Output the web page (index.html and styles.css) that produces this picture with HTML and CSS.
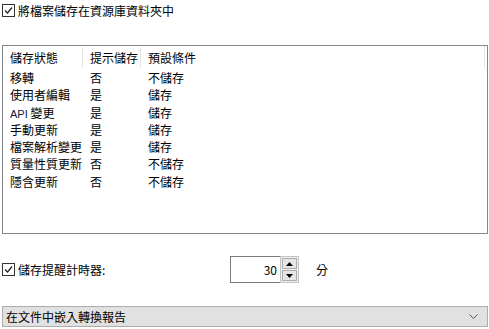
FILE: index.html
```html
<!DOCTYPE html>
<html lang="zh-Hant">

<head>
    <meta charset="UTF-8">
    <title>儲存設定</title>
    <link rel="stylesheet" href="styles.css">
</head>

<body>
    <!-- Save to repository -->
    <label class="check-row top-check">
        <span class="checkbox">
            <svg viewBox="0 0 11 11"><polyline points="2,5.5 4.5,8 9,2.5" fill="none" stroke="#222" stroke-width="1.2"></polyline></svg>
        </span>
        <span>將檔案儲存在資源庫資料夾中</span>
    </label>

    <!-- Save state list -->
    <div class="list">
        <div class="list-head">
            <div class="cell">儲存狀態</div>
            <div class="cell">提示儲存</div>
            <div class="cell">預設條件</div>
        </div>
        <div class="list-body">
            <div class="row"><div class="cell">移轉</div><div class="cell">否</div><div class="cell">不儲存</div></div>
            <div class="row"><div class="cell">使用者編輯</div><div class="cell">是</div><div class="cell">儲存</div></div>
            <div class="row"><div class="cell"><span class="latin">API</span> 變更</div><div class="cell">是</div><div class="cell">儲存</div></div>
            <div class="row"><div class="cell">手動更新</div><div class="cell">是</div><div class="cell">儲存</div></div>
            <div class="row"><div class="cell">檔案解析變更</div><div class="cell">是</div><div class="cell">儲存</div></div>
            <div class="row"><div class="cell">質量性質更新</div><div class="cell">否</div><div class="cell">不儲存</div></div>
            <div class="row"><div class="cell">隱含更新</div><div class="cell">否</div><div class="cell">不儲存</div></div>
        </div>
    </div>

    <!-- Reminder timer -->
    <div class="timer">
        <label class="check-row timer-label">
            <span class="checkbox">
                <svg viewBox="0 0 11 11"><polyline points="2,5.5 4.5,8 9,2.5" fill="none" stroke="#222" stroke-width="1.2"></polyline></svg>
            </span>
            <span>儲存提醒計時器:</span>
        </label>
        <div class="spin">
            <div class="spin-field">30</div>
            <div class="spin-buttons">
                <div class="spin-btn"><svg viewBox="0 0 7 4"><polygon points="0,4 3.5,0 7,4" fill="#000"></polygon></svg></div>
                <div class="spin-btn"><svg viewBox="0 0 7 4"><polygon points="0,0 7,0 3.5,4" fill="#000"></polygon></svg></div>
            </div>
        </div>
        <span class="unit">分</span>
    </div>

    <!-- Report option -->
    <div class="dropdown">
        <span>在文件中嵌入轉換報告</span>
        <svg class="chevron" viewBox="0 0 9 5"><polyline points="0.5,0.5 4.5,4.5 8.5,0.5" fill="none" stroke="#555" stroke-width="1"></polyline></svg>
    </div>
</body>

</html>
```

FILE: styles.css
```css
body {
    margin: 0;
    padding: 0;
    background: #fff;
    color: #000;
    font-family: "Noto Sans CJK TC", "Noto Sans", sans-serif;
    font-size: 12px;
    width: 489px;
    height: 329px;
    overflow: hidden;
}

/* Checkboxes */

.check-row {
    display: flex;
    align-items: center;
    gap: 3px;
}

.checkbox {
    width: 11px;
    height: 11px;
    border: 1px solid #333;
    background: #fff;
    display: flex;
}

.checkbox svg {
    width: 11px;
    height: 11px;
}

.top-check {
    padding: 3px 0 0 2px;
    height: 14px;
}

/* List */

.list {
    margin: 28px 1px 0 2px;
    height: 187px;
    border: 1px solid #828790;
    position: relative;
}

.list::after {
    content: "";
    position: absolute;
    right: 2px;
    top: 0;
    width: 1px;
    height: 22px;
    background: #e5e5e5;
}

.list-head,
.row {
    display: grid;
    grid-template-columns: 80px 58px 1fr;
}

.list-head {
    height: 23px;
    align-items: center;
}

.list-head .cell {
    border-right: 1px solid #e5e5e5;
    line-height: 21px;
}

.list-head .cell:last-child {
    border-right: none;
}

.cell {
    padding-left: 7px;
    white-space: nowrap;
}

.latin {
    font-family: "Liberation Sans", sans-serif;
    font-size: 11px;
    color: #10183a;
}

.row {
    height: 17.3px;
    line-height: 17.3px;
}

/* Timer */

.timer {
    display: flex;
    align-items: center;
    margin-top: 22px;
    height: 27px;
}

.timer-label {
    width: 228px;
    padding-left: 2px;
}

.spin {
    display: flex;
    height: 27px;
}

.spin-field {
    width: 46px;
    border: 1px solid #7a7a7a;
    border-right: none;
    text-align: right;
    padding-right: 3px;
    line-height: 25px;
}

.spin-buttons {
    width: 15px;
    border: 1px solid #c3c3c3;
    background: #f0f0f0;
    display: flex;
    flex-direction: column;
    gap: 1px;
    padding: 1px;
}

.spin-btn {
    flex: 1;
    background: #e5e5e5;
    border: 1px solid #adadad;
    display: flex;
    align-items: center;
    justify-content: center;
}

.spin-btn svg {
    width: 7px;
    height: 4px;
}

.unit {
    margin-left: 17px;
}

/* Dropdown */

.dropdown {
    margin: 23px 1px 0 2px;
    height: 19px;
    border: 1px solid #adadad;
    background: #e1e1e1;
    display: flex;
    align-items: center;
    justify-content: space-between;
    padding: 0 9px 0 3px;
}

.chevron {
    width: 9px;
    height: 5px;
}
```
